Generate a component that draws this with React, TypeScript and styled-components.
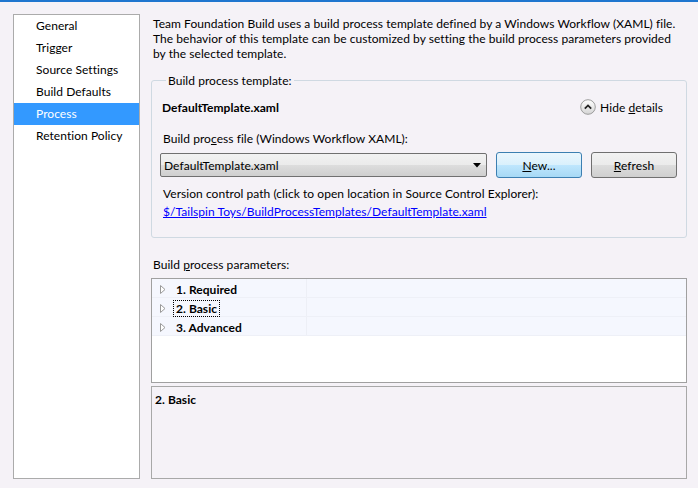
import React from "react";
import styled, { createGlobalStyle } from "styled-components";

const Global = createGlobalStyle`
  html, body { margin: 0; padding: 0; background: #f5f2f7; }
  body { font-family: Lato, "Noto Sans", sans-serif; font-size: 12px; letter-spacing: 0.05px; color: #000; }
  * { box-sizing: border-box; }
`;

const Window = styled.div`
  width: 698px;
  height: 488px;
  background: #f5f2f7;
  display: flex;
  flex-direction: column;
  overflow: hidden;
`;

const TopBar = styled.div`
  height: 2px;
  background: #1f76cf;
  flex: none;
`;

const Body = styled.div`
  flex: 1;
  display: flex;
  gap: 11px;
  padding: 12px 11px 9px 13px;
  min-height: 0;
`;

const NavList = styled.ul`
  list-style: none;
  margin: 0;
  padding: 0;
  width: 127px;
  flex: none;
  background: #fff;
  border: 1px solid #ababab;
`;

const NavItem = styled.li<{ $active?: boolean }>`
  height: 22px;
  line-height: 22px;
  padding-left: 22px;
  white-space: nowrap;
  background: ${(p) => (p.$active ? "#3399ff" : "transparent")};
  color: ${(p) => (p.$active ? "#fff" : "#000")};
`;

const Content = styled.div`
  flex: 1;
  display: flex;
  flex-direction: column;
  min-width: 0;
`;

const Intro = styled.p`
  margin: 2px 0 0 2px;
  line-height: 15px;
  white-space: nowrap;
`;

const Group = styled.fieldset`
  margin: 12px 0 0 0;
  padding: 10px 9px 16px 8px;
  border: 1px solid #cfd9e2;
  border-radius: 3px;
  min-width: 0;
`;

const Legend = styled.legend`
  padding: 0 2px;
  margin-left: 6px;
  line-height: 15px;
`;

const HeaderRow = styled.div`
  display: flex;
  align-items: center;
  justify-content: space-between;
  height: 18px;
  padding: 0 14px 0 2px;
`;

const TemplateName = styled.span`
  font-weight: bold;
`;

const Toggle = styled.span`
  display: flex;
  align-items: center;
  gap: 4px;
`;

const Label = styled.div<{ $top?: number }>`
  margin-top: ${(p) => p.$top ?? 0}px;
  padding-left: 3px;
  line-height: 18px;
  white-space: nowrap;
`;

const Row = styled.div`
  display: flex;
  gap: 9px;
  margin-top: 4px;
  align-items: center;
`;

const Combo = styled.div`
  flex: 1;
  height: 24px;
  border: 1px solid #707070;
  border-radius: 2px;
  background: linear-gradient(#f2f2f2 0%, #ebebeb 50%, #dddddd 51%, #cfcfcf 100%);
  display: flex;
  align-items: center;
  justify-content: space-between;
  padding: 0 5px 0 3px;
`;

const Button = styled.button<{ $hot?: boolean }>`
  width: 86px;
  height: 26px;
  font: inherit;
  letter-spacing: inherit;
  color: #000;
  border-radius: 3px;
  border: 1px solid ${(p) => (p.$hot ? "#3c7fb1" : "#707070")};
  background: ${(p) =>
    p.$hot
      ? "linear-gradient(#eaf6fd 0%, #d9f0fc 50%, #bee6fd 51%, #a7d9f5 100%)"
      : "linear-gradient(#f2f2f2 0%, #ebebeb 50%, #dddddd 51%, #cfcfcf 100%)"};
  padding: 0;
`;

const Link = styled.a`
  display: block;
  padding-left: 3px;
  line-height: 18px;
  color: #0000ff;
  text-decoration: underline;
  white-space: nowrap;
`;

const SectionLabel = styled.div`
  margin: 19px 0 0 2px;
  line-height: 15px;
`;

const Tree = styled.div`
  margin-top: 6px;
  height: 105px;
  border: 1px solid #a0a0a0;
  background: #fff;
  flex: none;
`;

const TreeRow = styled.div`
  height: 19px;
  display: flex;
  background: #f5f7fe;
  border-bottom: 1px solid #eef0f7;
`;

const TreeCell = styled.div`
  width: 155px;
  height: 100%;
  display: flex;
  align-items: center;
  padding: 3px 0 0 8px;
  border-right: 1px solid #edeff6;
`;

const TreeText = styled.span<{ $focus?: boolean }>`
  font-weight: bold;
  margin-left: 8px;
  padding: 0 2px;
  outline: ${(p) => (p.$focus ? "1px dotted #000" : "none")};
  line-height: 15px;
`;

const Details = styled.div`
  margin-top: 3px;
  flex: 1;
  border: 1px solid #a8a8a8;
  padding: 5px 3px;
`;

const DetailsTitle = styled.div`
  font-weight: bold;
  line-height: 16px;
`;

const Arrow = () => (
  <svg width="6" height="9" viewBox="0 0 6 9">
    <path d="M0.5 0.5 L5 4.5 L0.5 8.5 Z" fill="#fff" stroke="#9a9a9a" strokeWidth="1" />
  </svg>
);

const HideIcon = () => (
  <svg width="16" height="16" viewBox="0 0 16 16">
    <defs>
      <linearGradient id="hg" x1="0" y1="0" x2="0" y2="1">
        <stop offset="0" stopColor="#ffffff" />
        <stop offset="1" stopColor="#d4d4d4" />
      </linearGradient>
    </defs>
    <circle cx="8" cy="8" r="7.3" fill="url(#hg)" stroke="#9c9c9c" strokeWidth="1" />
    <path d="M4.8 9.6 L8 6.4 L11.2 9.6" fill="none" stroke="#222" strokeWidth="1.8" />
  </svg>
);

const DropArrow = () => (
  <svg width="8" height="5" viewBox="0 0 8 5">
    <path d="M0 0 L8 0 L4 4.5 Z" fill="#000" />
  </svg>
);

const navItems = ["General", "Trigger", "Source Settings", "Build Defaults", "Process", "Retention Policy"];

export default function App() {
  return (
    <>
      <Global />
      <Window>
        <TopBar />
        <Body>
          <NavList>
            {navItems.map((n) => (
              <NavItem key={n} $active={n === "Process"}>
                {n}
              </NavItem>
            ))}
          </NavList>
          <Content>
            <Intro>
              Team Foundation Build uses a build process template defined by a Windows Workflow (XAML) file.
              <br />
              The behavior of this template can be customized by setting the build process parameters provided
              <br />
              by the selected template.
            </Intro>
            <Group>
              <Legend>Build process template:</Legend>
              <HeaderRow>
                <TemplateName>DefaultTemplate.xaml</TemplateName>
                <Toggle>
                  <HideIcon />
                  <span>
                    Hide <u>d</u>etails
                  </span>
                </Toggle>
              </HeaderRow>
              <Label $top={14}>
                Build pro<u>c</u>ess file (Windows Workflow XAML):
              </Label>
              <Row>
                <Combo>
                  <span>DefaultTemplate.xaml</span>
                  <DropArrow />
                </Combo>
                <Button $hot>
                  <u>N</u>ew...
                </Button>
                <Button>
                  <u>R</u>efresh
                </Button>
              </Row>
              <Label $top={7}>Version control path (click to open location in Source Control Explorer):</Label>
              <Link href="#">$/Tailspin Toys/BuildProcessTemplates/DefaultTemplate.xaml</Link>
            </Group>
            <SectionLabel>
              Build <u>p</u>rocess parameters:
            </SectionLabel>
            <Tree>
              <TreeRow>
                <TreeCell>
                  <Arrow />
                  <TreeText>1. Required</TreeText>
                </TreeCell>
              </TreeRow>
              <TreeRow>
                <TreeCell>
                  <Arrow />
                  <TreeText $focus>2. Basic</TreeText>
                </TreeCell>
              </TreeRow>
              <TreeRow>
                <TreeCell>
                  <Arrow />
                  <TreeText>3. Advanced</TreeText>
                </TreeCell>
              </TreeRow>
            </Tree>
            <Details>
              <DetailsTitle>2. Basic</DetailsTitle>
            </Details>
          </Content>
        </Body>
      </Window>
    </>
  );
}
